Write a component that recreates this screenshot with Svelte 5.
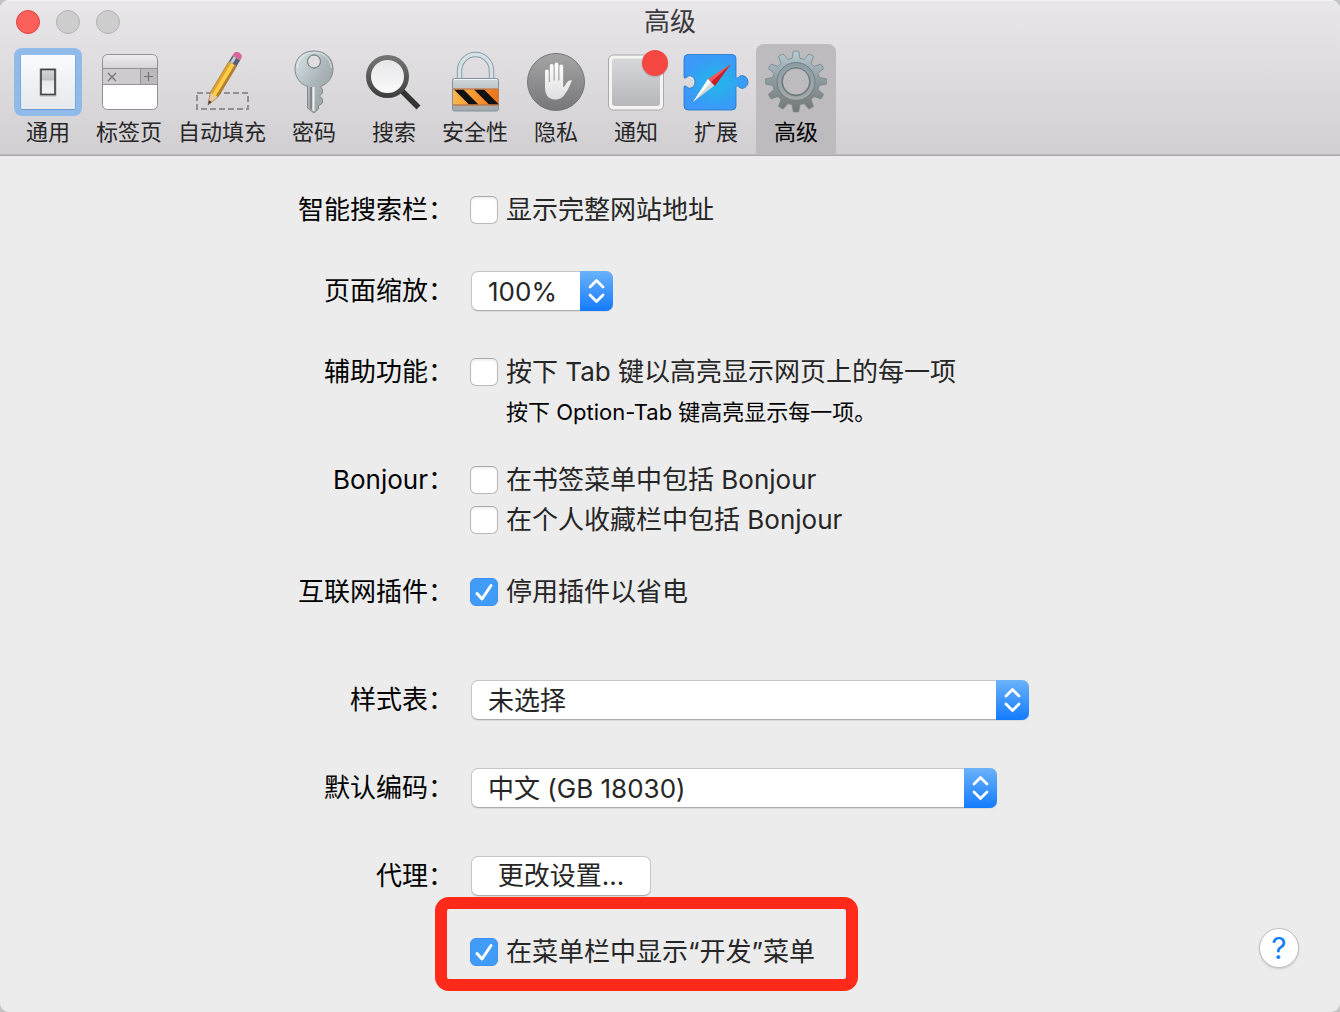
<script>
  const TABS = [
    { id: 'general', label: '通用' },
    { id: 'tabs', label: '标签页' },
    { id: 'autofill', label: '自动填充' },
    { id: 'passwords', label: '密码' },
    { id: 'search', label: '搜索' },
    { id: 'security', label: '安全性' },
    { id: 'privacy', label: '隐私' },
    { id: 'notifications', label: '通知' },
    { id: 'extensions', label: '扩展' },
    { id: 'advanced', label: '高级' }
  ];

  let active = $state('advanced');
  let fullAddress = $state(false);
  let tabHighlight = $state(false);
  let bonjourBookmarks = $state(false);
  let bonjourFavorites = $state(false);
  let stopPlugins = $state(true);
  let showDevelop = $state(true);

  const title = $derived(TABS.find((t) => t.id === active).label);

  // outline of the gear: 12 tapered teeth around the centre
  function gearPath(cx, cy, outer, inner) {
    const pts = [];
    for (let i = 0; i < 12; i++) {
      const mid = (i * 30 - 90) * Math.PI / 180;
      [[-0.17, inner], [-0.085, outer], [0.085, outer], [0.17, inner]].forEach(([a, r]) => {
        pts.push(`${(cx + Math.cos(mid + a) * r).toFixed(2)} ${(cy + Math.sin(mid + a) * r).toFixed(2)}`);
      });
    }
    return `M${pts.join('L')}Z`;
  }
</script>

{#snippet check(checked)}
  {#if checked}
    <svg class="tick" viewBox="0 0 28 28" aria-hidden="true">
      <path d="M7 15.500L12 21L21 7.500" fill="none" stroke="#fff" stroke-width="3" stroke-linecap="round" stroke-linejoin="round" />
    </svg>
  {/if}
{/snippet}

{#snippet arrows()}
  <svg class="arrows" viewBox="0 0 33 40" aria-hidden="true">
    <path d="M10 16L16.500 9.500L23 16M10 24L16.500 30.500L23 24" fill="none" stroke="#fff" stroke-width="2.800" stroke-linecap="round" stroke-linejoin="round" />
  </svg>
{/snippet}

<div class="window">
  <header>
    <div class="titlebar">
      <div class="lights">
        <button class="light close" aria-label="关闭"></button>
        <button class="light" aria-label="最小化" disabled></button>
        <button class="light" aria-label="缩放" disabled></button>
      </div>
      <h1>{title}</h1>
    </div>

    <nav class="toolbar">
      {#each TABS as tab (tab.id)}
        <button class="tab" class:active={active === tab.id} onclick={() => (active = tab.id)}>
          <svg class="icon" viewBox="0 0 70 70" aria-hidden="true">
            {#if tab.id === 'general'}
              <defs>
                <linearGradient id="plate" x2="0" y2="1"><stop stop-color="#fafbfe" /><stop offset="1" stop-color="#e4e9ec" /></linearGradient>
                <linearGradient id="rocker" x2="0" y2="1"><stop stop-color="#d5d7d9" /><stop offset=".42" stop-color="#bfc2c4" /><stop offset=".46" stop-color="#e6e8ea" /><stop offset="1" stop-color="#f3f5f6" /></linearGradient>
              </defs>
              <rect x="1" y="1" width="68" height="68" rx="8" fill="#8fbaea" />
              <rect x="7.500" y="8" width="55" height="55" rx="2" fill="#6b99cb" />
              <rect x="8" y="8" width="54" height="54" rx="1" fill="url(#plate)" />
              <rect x="26" y="21" width="18" height="29" rx="2" fill="#b9bec2" opacity=".6" />
              <rect x="28" y="22.500" width="14" height="25" fill="url(#rocker)" stroke="#434548" stroke-width="1.700" />
            {:else if tab.id === 'tabs'}
              <defs><linearGradient id="bar" x2="0" y2="1"><stop stop-color="#efedf0" /><stop offset="1" stop-color="#d5d3d6" /></linearGradient></defs>
              <g transform="translate(1 0)">
                <rect x="7.500" y="7.500" width="55" height="55" rx="5" fill="#fff" />
                <path d="M7.500 21.500V12.500a5 5 0 0 1 5-5H57.500a5 5 0 0 1 5 5V21.500z" fill="url(#bar)" />
                <path d="M7.500 21.500h55v16h-55z" fill="#cdcbce" />
                <path d="M45.500 21.500h17v16h-17z" fill="#bbb9bc" />
                <path d="M7.500 21.500h55M7.500 37.500h55M45.500 21.500v16" stroke="#949295" />
                <path d="M13 26l8 8M21 26l-8 8M49 29.500h9M53.500 25v9" stroke="#727073" stroke-width="1.200" />
                <rect x="7.500" y="7.500" width="55" height="55" rx="5" fill="none" stroke="#929093" />
              </g>
            {:else if tab.id === 'autofill'}
              <rect x="10" y="46" width="51" height="16" fill="none" stroke="#919092" stroke-width="2" stroke-dasharray="6 3" />
              <g transform="translate(21 58) rotate(31)">
                <path d="M0 0L-4.500 -12H4.500z" fill="#e9c9a1" />
                <path d="M0 0L-1.700 -4.500H1.700z" fill="#403a38" />
                <path d="M-4.500 -12V-48H-1.500V-12z" fill="#e2a529" />
                <path d="M-1.500 -11V-48H2V-11z" fill="#ffce46" />
                <path d="M2 -12V-48H4.500V-12z" fill="#bd801f" />
                <path d="M-4.500 -48H4.500V-55H-4.500z" fill="#5a6070" />
                <path d="M-3 -48H0V-55H-3z" fill="#c1cbd8" />
                <path d="M-4.500 -55V-57Q-4.500 -61 0 -61T4.500 -57V-55z" fill="#d9679a" />
                <path d="M-4.500 -12V-48M4.500 -12V-48M-4.500 -12L0 0L4.500 -12" fill="none" stroke="#8f5c25" stroke-width=".5" />
              </g>
            {:else if tab.id === 'passwords'}
              <defs><linearGradient id="key" x2="1" y2="1"><stop stop-color="#d9e5e8" /><stop offset=".5" stop-color="#abb7bb" /><stop offset="1" stop-color="#929698" /></linearGradient></defs>
              <path fill-rule="evenodd" d="M35 4C24 4 16 11 16 22C16 30 21 37 28.500 39.500V61L35 66L39.500 62V59L43.500 56V52L40.500 49L43.500 46V42.500L41.500 39.500C49 37 54 30 54 22C54 11 46 4 35 4zM35 8a6.500 6.500 0 1 1 0 13a6.500 6.500 0 0 1 0-13z" fill="url(#key)" stroke="#85898b" />
              <path d="M18 21C19 11 26 6 35 5.500S51 11 52.500 21" fill="none" stroke="#ecf3f5" opacity=".7" />
              <path d="M31 40V61.500L33 63V40z" fill="#828588" />
              <path d="M33.500 40V63.500L35.500 64V40z" fill="#f1f1f2" />
              <circle cx="35" cy="14.500" r="6.500" fill="none" stroke="#818789" />
            {:else if tab.id === 'search'}
              <defs>
                <linearGradient id="rim" x2="0" y2="1"><stop stop-color="#737373" /><stop offset="1" stop-color="#404040" /></linearGradient>
                <linearGradient id="lens" x2="0" y2="1"><stop stop-color="#e5e5e7" /><stop offset="1" stop-color="#fcfcfd" /></linearGradient>
              </defs>
              <path d="M42.500 43.500L59.500 60.500" stroke="#333334" stroke-width="5.500" />
              <circle cx="28.500" cy="29.500" r="19" fill="url(#lens)" stroke="url(#rim)" stroke-width="5" />
            {:else if tab.id === 'security'}
              <defs>
                <linearGradient id="body" x2="0" y2="1"><stop stop-color="#ced6da" /><stop offset="1" stop-color="#a2a7aa" /></linearGradient>
                <linearGradient id="hazard"><stop stop-color="#ffb74c" /><stop offset="1" stop-color="#ed7319" /></linearGradient>
                <clipPath id="band"><path d="M12 42.500h47v15H12z" /></clipPath>
              </defs>
              <path d="M19.500 33V24A16 16.500 0 0 1 51.500 24V33" fill="none" stroke="#8c9ba6" stroke-width="5.500" />
              <path d="M19.500 33V24A16 16.500 0 0 1 51.500 24V33" fill="none" stroke="#d4e1e6" stroke-width="3.500" />
              <rect x="12.500" y="31.500" width="46" height="32.500" rx="2" fill="url(#body)" stroke="#8292a3" />
              <path d="M14 32.500h43" stroke="#eef6f9" />
              <path d="M13 42.500h45.500v15H13z" fill="url(#hazard)" />
              <path d="M13 42h45.500M13 58h45.500" stroke="#c75c18" />
              <path clip-path="url(#band)" d="M14 42.500h9.500l15 15H29zM34 42.500h10l15 15H49z" fill="#111" />
            {:else if tab.id === 'privacy'}
              <defs>
                <linearGradient id="disc" x2="0" y2="1"><stop stop-color="#a5a5a6" /><stop offset="1" stop-color="#777779" /></linearGradient>
                <linearGradient id="hand" x2="0" y2="1"><stop stop-color="#fff" /><stop offset="1" stop-color="#dedee0" /></linearGradient>
              </defs>
              <circle cx="35" cy="35" r="28.500" fill="url(#disc)" stroke="#767678" />
              <path d="M24 24.500a1.900 1.900 0 0 1 3.800 0V35h1V19a1.900 1.900 0 0 1 3.800 0V33.500h1V17.500a1.900 1.900 0 0 1 3.800 0V33.500h1V19.500a1.900 1.900 0 0 1 3.800 0V40Q43.500 40 45.500 36Q47.500 32.500 51 33.500C49.500 36 48 42 44.500 46C42 51 38 52.500 34 52.500C27 52.500 24 47 24 40z" fill="url(#hand)" />
            {:else if tab.id === 'notifications'}
              <defs><linearGradient id="note" x2="0" y2="1"><stop stop-color="#d5d7da" /><stop offset="1" stop-color="#b5b7ba" /></linearGradient></defs>
              <rect x="7.500" y="8" width="55" height="55" rx="5" fill="#f5f4f2" stroke="#aaa8a8" />
              <rect x="11" y="11.500" width="48" height="47.500" rx="3" fill="url(#note)" />
              <circle cx="54" cy="17" r="13.500" fill="#777" opacity=".25" />
              <circle cx="54" cy="16" r="13" fill="#f44742" />
            {:else if tab.id === 'extensions'}
              <defs>
                <radialGradient id="sea"><stop stop-color="#20b9e7" /><stop offset="1" stop-color="#3c98f9" /></radialGradient>
              </defs>
              <path d="M7 7.500H51a4 4 0 0 1 4 4V30.500Q56 32 58 30C61 26.500 67 30 67 35S61 43.500 58 40Q56 38 55 39.500V59a4 4 0 0 1-4 4H7a4 4 0 0 1-4-4V39.500Q4 38 6 40C9 43 14 40 14 35S9 27 6 30Q4 32 3 30.500V11.500a4 4 0 0 1 4-4z" fill="url(#sea)" stroke="#2576bf" stroke-width=".8" />
              <path d="M12 55L27 32L33.500 38.500z" fill="#d6d9db" />
              <path d="M12 55L27 32L30 35.200z" fill="#fff" />
              <path d="M50 17L27 32L30.500 35.500z" fill="#fa5758" />
              <path d="M50 17L30 35L34 39z" fill="#c8202a" />
            {:else}
              <defs>
                <linearGradient id="steel" x2="0" y2="1"><stop stop-color="#b8cdd4" /><stop offset=".5" stop-color="#8c999d" /><stop offset="1" stop-color="#747777" /></linearGradient>
                <linearGradient id="ring" x2="0" y2="1"><stop stop-color="#8b9da3" /><stop offset="1" stop-color="#a5a8a9" /></linearGradient>
              </defs>
              <path fill-rule="evenodd" d="{gearPath(35, 34.5, 30.5, 23.5)}M35 21a13.500 13.500 0 1 0 0 27a13.500 13.500 0 0 0 0-27z" fill="url(#steel)" stroke="#75858b" stroke-width=".8" stroke-linejoin="round" />
              <circle cx="35" cy="34.500" r="17" fill="none" stroke="url(#ring)" stroke-width="4" />
              <circle cx="35" cy="34.500" r="19" fill="none" stroke="#65767c" stroke-width=".8" />
              <circle cx="35" cy="34.500" r="14" fill="none" stroke="#66757a" />
            {/if}
          </svg>
          <span>{tab.label}</span>
        </button>
      {/each}
    </nav>
  </header>

  <main>
    <div class="row">
      <span class="name">智能搜索栏：</span>
      <label class="option">
        <span class="box"><input type="checkbox" bind:checked={fullAddress} />{@render check(fullAddress)}</span>
        显示完整网站地址
      </label>
    </div>

    <div class="row loose">
      <label class="name" for="zoom">页面缩放：</label>
      <div class="popup small">
        <select id="zoom"><option>100%</option></select>
        {@render arrows()}
      </div>
    </div>

    <div class="row loose">
      <span class="name">辅助功能：</span>
      <div>
        <label class="option">
          <span class="box"><input type="checkbox" bind:checked={tabHighlight} />{@render check(tabHighlight)}</span>
          按下 Tab 键以高亮显示网页上的每一项
        </label>
        <p class="note">按下 Option-Tab 键高亮显示每一项。</p>
      </div>
    </div>

    <div class="row tight">
      <span class="name">Bonjour：</span>
      <div>
        <label class="option">
          <span class="box"><input type="checkbox" bind:checked={bonjourBookmarks} />{@render check(bonjourBookmarks)}</span>
          在书签菜单中包括 Bonjour
        </label>
        <label class="option">
          <span class="box"><input type="checkbox" bind:checked={bonjourFavorites} />{@render check(bonjourFavorites)}</span>
          在个人收藏栏中包括 Bonjour
        </label>
      </div>
    </div>

    <div class="row medium">
      <span class="name">互联网插件：</span>
      <label class="option">
        <span class="box"><input type="checkbox" bind:checked={stopPlugins} />{@render check(stopPlugins)}</span>
        停用插件以省电
      </label>
    </div>

    <div class="row section">
      <label class="name" for="stylesheet">样式表：</label>
      <div class="popup wide">
        <select id="stylesheet"><option>未选择</option></select>
        {@render arrows()}
      </div>
    </div>

    <div class="row field">
      <label class="name" for="encoding">默认编码：</label>
      <div class="popup encoding">
        <select id="encoding"><option>中文 (GB 18030)</option></select>
        {@render arrows()}
      </div>
    </div>

    <div class="row field">
      <span class="name">代理：</span>
      <button class="push">更改设置…</button>
    </div>

    <div class="row medium">
      <div class="footer">
        <label class="option highlight">
          <span class="box"><input type="checkbox" bind:checked={showDevelop} />{@render check(showDevelop)}</span>
          在菜单栏中显示“开发”菜单
        </label>
        <button class="help">?</button>
      </div>
    </div>
  </main>
</div>

<style>
  :global(body) {
    background: #c4c4c4;
  }

  .window {
    min-height: 100vh;
    border-radius: 9px;
    overflow: hidden;
    background: #ececec;
    color: #262626;
    font-family: Inter, 'Noto Sans CJK SC', sans-serif;
    font-size: 26px;
    line-height: 40px;
  }

  button,
  select {
    font: inherit;
    color: inherit;
    border: 0;
    margin: 0;
    padding: 0;
  }

  header {
    background: linear-gradient(#e9e7ea, #d1cfd2);
    border-bottom: 1px solid #a9a8aa;
    box-shadow: inset 0 1px #f5f4f6, inset 0 -1px #bdbbbe;
  }

  .titlebar {
    display: grid;
    grid-template-columns: 1fr auto 1fr;
    align-items: center;
    height: 44px;
    padding: 0 16px;
  }

  .lights {
    display: flex;
    gap: 16px;
  }

  .light {
    width: 24px;
    height: 24px;
    border: 1px solid #b3b1b4;
    border-radius: 50%;
    background: #cecdce;
  }

  .light.close {
    border-color: #e0443e;
    background: #fc605b;
  }

  h1 {
    margin: 0;
    font-size: 26px;
    font-weight: 400;
    color: #3b3a3c;
  }

  .toolbar {
    display: flex;
    padding: 0 8px 1px;
  }

  .tab {
    display: flex;
    flex-direction: column;
    align-items: center;
    min-width: 80px;
    padding: 3px 8px 7px;
    border-radius: 8px 8px 0 0;
    background: none;
    font-size: 22px;
    line-height: 30px;
    white-space: nowrap;
  }

  .tab.active {
    background: #bdbbbd;
    color: #000;
  }

  .icon {
    width: 70px;
    height: 70px;
    margin: 0 -3px;
  }

  main {
    padding: 34px 0 36px;
  }

  .row {
    display: grid;
    grid-template-columns: 227fr 435fr;
    column-gap: 16px;
  }

  .row.tight {
    margin-top: 28px;
  }

  .row.medium {
    margin-top: 32px;
  }

  .row.loose {
    margin-top: 41px;
  }

  .row.field {
    margin-top: 48px;
  }

  .row.section {
    margin-top: 68px;
  }

  .name {
    text-align: right;
    color: #000;
  }

  .option {
    display: flex;
    align-items: center;
    gap: 8px;
    width: fit-content;
  }

  .box {
    display: grid;
    flex: none;
  }

  .box input {
    grid-area: 1 / 1;
    appearance: none;
    width: 28px;
    height: 28px;
    margin: 0;
    border: 1px solid #bababa;
    border-top-color: #a8a8a8;
    border-radius: 6px;
    background: #fff;
    box-shadow: inset 0 2px 2px #f0f0f0;
  }

  .box input:checked {
    border-color: #3b91f3;
    background: #419bf9;
    box-shadow: none;
  }

  .tick {
    grid-area: 1 / 1;
    width: 28px;
    height: 28px;
    pointer-events: none;
  }

  .note {
    margin: 0 0 0 36px;
    font-size: 22px;
    color: #000;
  }

  .popup {
    display: grid;
    max-width: 100%;
    height: 40px;
    margin-left: 1px;
  }

  .popup.small {
    width: 142px;
  }

  .popup.wide {
    width: 558px;
  }

  .popup.encoding {
    width: 526px;
  }

  select {
    grid-area: 1 / 1;
    appearance: none;
    width: 100%;
    height: 40px;
    padding: 0 40px 0 16px;
    border: 1px solid #c6c6c6;
    border-bottom-color: #adadad;
    border-radius: 7px;
    background: #fff;
    box-shadow: 0 1px 1px #dadada;
  }

  .arrows {
    grid-area: 1 / 1;
    justify-self: end;
    width: 33px;
    height: 40px;
    border-radius: 0 7px 7px 0;
    background: linear-gradient(#6bb2f9, #147bfe);
    pointer-events: none;
  }

  .push {
    width: 180px;
    height: 40px;
    margin-left: 1px;
    border: 1px solid #c6c6c6;
    border-bottom-color: #adadad;
    border-radius: 7px;
    background: #fff;
    box-shadow: 0 1px 1px #dadada;
    line-height: 38px;
  }

  .footer {
    grid-column: 2;
    display: flex;
    justify-content: space-between;
    align-items: flex-start;
    padding-right: 41px;
  }

  .footer .option {
    align-self: flex-end;
    padding-top: 4px;
  }

  .highlight {
    position: relative;
  }

  /* red marker frame over the develop menu option */
  .highlight::after {
    content: '';
    position: absolute;
    inset: -31px -43px -19px -35px;
    border: 12px solid #ff2a1a;
    border-radius: 14px;
    pointer-events: none;
  }

  .help {
    width: 40px;
    height: 40px;
    border: 1px solid #c0c0c0;
    border-radius: 50%;
    background: #fff;
    box-shadow: 0 1px 2px #c8c8c8;
    color: #147efb;
    font-size: 30px;
    line-height: 38px;
  }
</style>
